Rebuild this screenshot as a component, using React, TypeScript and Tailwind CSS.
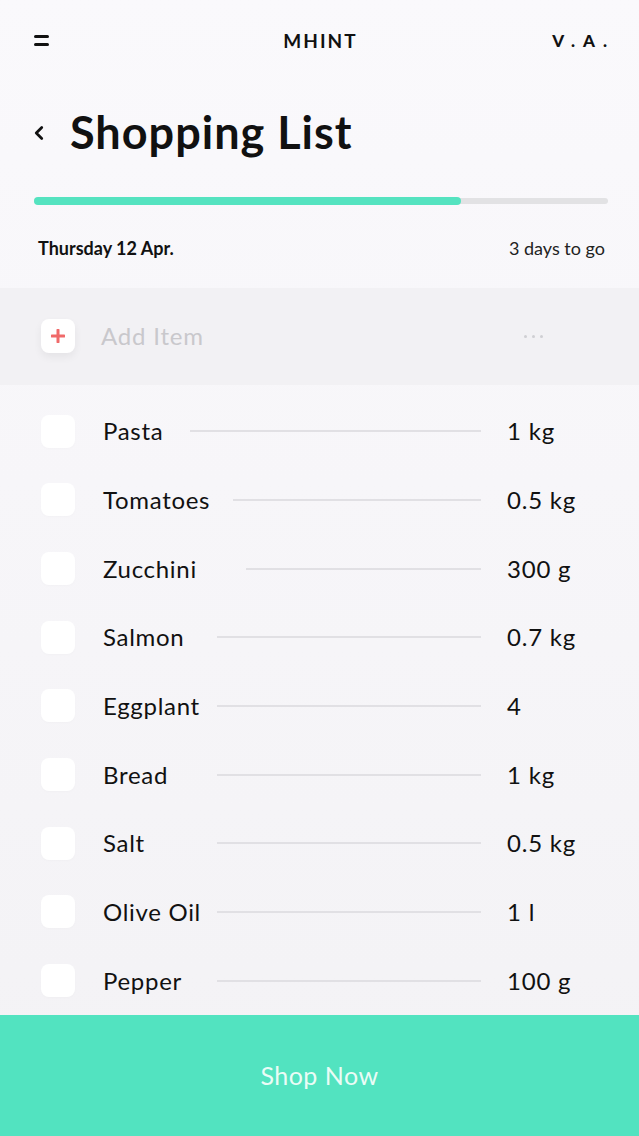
import { ChevronLeft } from "lucide-react"

const items = [
  { name: "Pasta", qty: "1 kg", nameW: "w-[87px]" },
  { name: "Tomatoes", qty: "0.5 kg", nameW: "w-[130px]" },
  { name: "Zucchini", qty: "300 g", nameW: "w-[143px]" },
  { name: "Salmon", qty: "0.7 kg", nameW: "w-[114px]" },
  { name: "Eggplant", qty: "4", nameW: "w-[114px]" },
  { name: "Bread", qty: "1 kg", nameW: "w-[114px]" },
  { name: "Salt", qty: "0.5 kg", nameW: "w-[114px]" },
  { name: "Olive Oil", qty: "1 l", nameW: "w-[114px]" },
  { name: "Pepper", qty: "100 g", nameW: "w-[114px]" },
]

export default function App() {
  return (
    <div
      className="flex h-[1136px] w-full flex-col overflow-hidden bg-gradient-to-b from-[#faf9fc] to-[#f3f2f5] text-[#111]"
      style={{ fontFamily: "Lato, 'Noto Sans', sans-serif" }}
    >
      {/* Top bar */}
      <header className="grid h-[82px] grid-cols-[1fr_auto_1fr] items-center px-[34px]">
        <div className="flex w-[15px] flex-col gap-[5px]">
          <span className="h-[3px] rounded-full bg-[#111]" />
          <span className="h-[3px] rounded-full bg-[#111]" />
        </div>
        <span className="pl-[2px] text-[19px] font-bold tracking-[2px]">MHINT</span>
        <span className="-mr-[10px] justify-self-end text-[17px] font-black tracking-[8px]">V.A.</span>
      </header>

      {/* Title */}
      <div className="flex h-[104px] items-center gap-[20px] pl-[28px] pb-[2px]">
        <ChevronLeft className="h-[22px] w-[22px]" strokeWidth={3} />
        <h1 className="text-[45px] font-bold leading-none tracking-[1px]">Shopping List</h1>
      </div>

      {/* Progress */}
      <div className="ml-[34px] mr-[31px] mt-[11px] flex h-[8px] items-center">
        <div className="relative h-[6px] w-full rounded-full bg-[#e2e2e4]">
          <div className="absolute -top-[1px] left-0 h-[8px] w-[427px] rounded-full bg-[#55e3c0]" />
        </div>
      </div>

      <div className="flex h-[83px] items-center justify-between pl-[38px] pr-[34px] pt-[4px] text-[18px]">
        <span className="font-bold">Thursday 12 Apr.</span>
        <span className="text-[#222]">3 days to go</span>
      </div>

      {/* Add item */}
      <div className="flex h-[97px] items-center bg-[#f2f1f4] pl-[41px] pr-[96px]">
        <div className="flex h-[34px] w-[34px] items-center justify-center rounded-lg bg-white shadow-[0_4px_8px_rgba(0,0,0,0.06)]">
          <svg width="14" height="14" viewBox="0 0 14 14">
            <path d="M7 1v12M1 7h12" stroke="#f06a6a" strokeWidth="3" strokeLinecap="round" />
          </svg>
        </div>
        <span className="ml-[26px] flex-1 text-[24px] tracking-[0.8px] text-[#c9c8cc]">Add Item</span>
        <span className="flex gap-[5px]">
          <span className="h-[3px] w-[3px] rounded-full bg-[#cfcfd3]" />
          <span className="h-[3px] w-[3px] rounded-full bg-[#cfcfd3]" />
          <span className="h-[3px] w-[3px] rounded-full bg-[#cfcfd3]" />
        </span>
      </div>

      {/* Items */}
      <ul className="flex-1 pt-[12px]">
        {items.map((it) => (
          <li key={it.name} className="flex h-[68.7px] items-center pl-[41px] pr-[26px]">
            <span className="h-[33px] w-[34px] shrink-0 rounded-lg bg-white shadow-[0_1px_3px_rgba(0,0,0,0.02)]" />
            <span className={`ml-[28px] ${it.nameW} shrink-0 text-[24px] tracking-[0.7px]`}>{it.name}</span>
            <span className="h-[2px] flex-1 bg-[#e1e0e4]" />
            <span className="w-[132px] shrink-0 pl-[26px] text-[24px] tracking-[0.8px]">{it.qty}</span>
          </li>
        ))}
      </ul>

      {/* CTA */}
      <button className="flex h-[121px] w-full shrink-0 items-center justify-center bg-[#52e3c0] text-[25px] tracking-[0.5px] text-[#eafcf6]">
        Shop Now
      </button>
    </div>
  )
}
